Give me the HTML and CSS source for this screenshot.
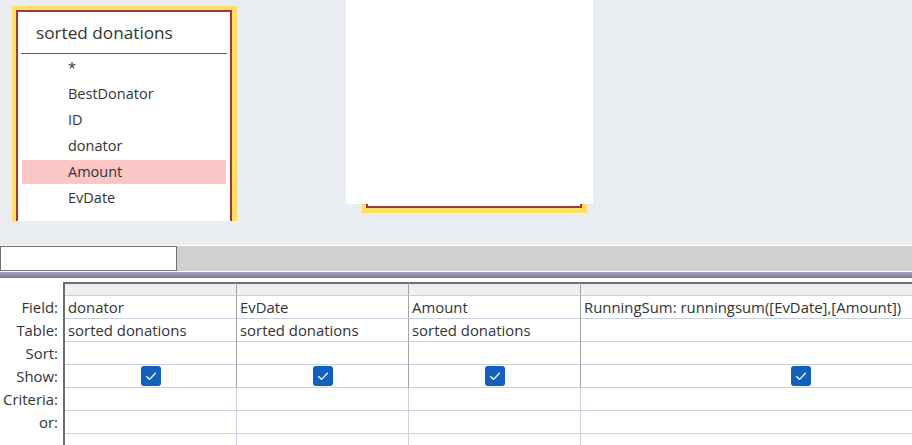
FILE: index.html
```html
<!DOCTYPE html>
<html>
<head>
<meta charset="utf-8">
<link rel="stylesheet" href="styles.css">
</head>
<body>
<div class="app">
  <div class="design">
    <div class="canvas">
      <div class="tbl tbl1">
        <div class="tbl-inner">
          <div class="tbl-title">sorted donations</div>
          <ul class="fields">
            <li>*</li>
            <li>BestDonator</li>
            <li>ID</li>
            <li>donator</li>
            <li class="sel">Amount</li>
            <li>EvDate</li>
          </ul>
        </div>
      </div>
      <div class="tbl tbl2"><div class="tbl-inner"></div></div>
      <div class="blank"></div>
    </div>
  </div>
  <div class="splitbar"><div class="namebox"></div></div>
  <div class="divider"></div>
  <div class="qbe">
    <div class="lbl hd"></div>
    <div class="c hd"></div><div class="c hd"></div><div class="c hd"></div><div class="c hd last"></div>

    <div class="lbl">Field:</div>
    <div class="c">donator</div><div class="c">EvDate</div><div class="c">Amount</div><div class="c last">RunningSum: runningsum([EvDate],[Amount])</div>

    <div class="lbl">Table:</div>
    <div class="c">sorted donations</div><div class="c">sorted donations</div><div class="c">sorted donations</div><div class="c last"></div>

    <div class="lbl">Sort:</div>
    <div class="c"></div><div class="c"></div><div class="c"></div><div class="c last"></div>

    <div class="lbl">Show:</div>
    <div class="c chk"><span class="box"><svg viewBox="0 0 20 20" width="20" height="20"><polyline points="5.6,10.6 8.6,13.4 14.4,7.2" fill="none" stroke="#fff" stroke-width="1.3" stroke-linecap="round" stroke-linejoin="round"/></svg></span></div>
    <div class="c chk"><span class="box"><svg viewBox="0 0 20 20" width="20" height="20"><polyline points="5.6,10.6 8.6,13.4 14.4,7.2" fill="none" stroke="#fff" stroke-width="1.3" stroke-linecap="round" stroke-linejoin="round"/></svg></span></div>
    <div class="c chk"><span class="box"><svg viewBox="0 0 20 20" width="20" height="20"><polyline points="5.6,10.6 8.6,13.4 14.4,7.2" fill="none" stroke="#fff" stroke-width="1.3" stroke-linecap="round" stroke-linejoin="round"/></svg></span></div>
    <div class="c chk last"><span class="box"><svg viewBox="0 0 20 20" width="20" height="20"><polyline points="5.6,10.6 8.6,13.4 14.4,7.2" fill="none" stroke="#fff" stroke-width="1.3" stroke-linecap="round" stroke-linejoin="round"/></svg></span></div>

    <div class="lbl">Criteria:</div>
    <div class="c lt"></div><div class="c lt"></div><div class="c lt"></div><div class="c lt last"></div>

    <div class="lbl">or:</div>
    <div class="c lt"></div><div class="c lt"></div><div class="c lt"></div><div class="c lt last"></div>

    <div class="lbl"></div>
    <div class="c lt"></div><div class="c lt"></div><div class="c lt"></div><div class="c lt last"></div>
  </div>
</div>
</body>
</html>
```
FILE: styles.css
```css
html, body {
  margin: 0;
  padding: 0;
  background: #ffffff;
}
body {
  font-family: "Open Sans", "Noto Sans", sans-serif;
  color: #333333;
  width: 912px;
  height: 445px;
  overflow: hidden;
}
.app {
  width: 912px;
  height: 445px;
  overflow: hidden;
}
.design {
  height: 245px;
  background: #e9edf1;
  border-bottom: 1px solid #ffffff;
}
.canvas {
  position: relative;
  height: 221px;
  overflow: hidden;
}
.tbl {
  position: absolute;
  box-sizing: border-box;
  width: 225px;
  border: 4px solid #fedf64;
  border-right-width: 5px;
  background: #fedf64;
}
.tbl-inner {
  box-sizing: border-box;
  height: 100%;
  border: 2px solid #a4373a;
  background: #ffffff;
}
.tbl1 {
  left: 12px;
  top: 6px;
  height: 260px;
}
.tbl2 {
  left: 362px;
  top: -100px;
  height: 313px;
  border-bottom-width: 5px;
}
.blank {
  position: absolute;
  left: 346px;
  top: 0;
  width: 247px;
  height: 204px;
  background: #ffffff;
}
.tbl-title {
  margin: 0 3px;
  height: 41px;
  line-height: 41px;
  padding-left: 15px;
  font-size: 17.2px;
  border-bottom: 1px solid #a83b3e;
}
.fields {
  list-style: none;
  margin: 0;
  padding: 2px 4px 0;
}
.fields li {
  height: 24px;
  line-height: 24px;
  margin-bottom: 2px;
  padding-left: 46px;
  font-size: 14.5px;
}
.fields li.sel {
  background: #fcc5c6;
}
.splitbar {
  height: 25px;
  background: #d0d0d0;
  border-bottom: 1px solid #ffffff;
}
.namebox {
  box-sizing: border-box;
  width: 177px;
  height: 25px;
  background: #ffffff;
  border: 1px solid #707070;
}
.divider {
  height: 6px;
  background: linear-gradient(#a4a1be, #7d7a9a);
  margin-bottom: 4px;
}
.qbe {
  display: grid;
  grid-template-columns: 65px 172px 172px 172px 439px;
  grid-template-rows: 14px repeat(7, 23px);
  font-size: 14.9px;
}
.qbe > div {
  box-sizing: border-box;
  white-space: nowrap;
  overflow: hidden;
}
.lbl {
  border-right: 2px solid #6d6d6d;
  text-align: right;
  padding-right: 5px;
  line-height: 23px;
}
.c {
  border-right: 1px solid #a3a3a3;
  border-bottom: 1px solid #c8d0e2;
  padding-left: 3px;
  line-height: 22px;
}
.c.last {
  border-right: none;
}
.c.hd {
  background: #efefef;
  border-top: 2px solid #6d6d6d;
}
.c.lt {
  border-right-color: #c8d0e2;
}
.c.lt.last {
  border-right: none;
}
.chk {
  display: flex;
  justify-content: center;
  align-items: center;
  padding-left: 0;
}
.box {
  display: block;
  width: 20px;
  height: 20px;
  border-radius: 3px;
  background: #1160c0;
}
.box svg {
  display: block;
}
```
